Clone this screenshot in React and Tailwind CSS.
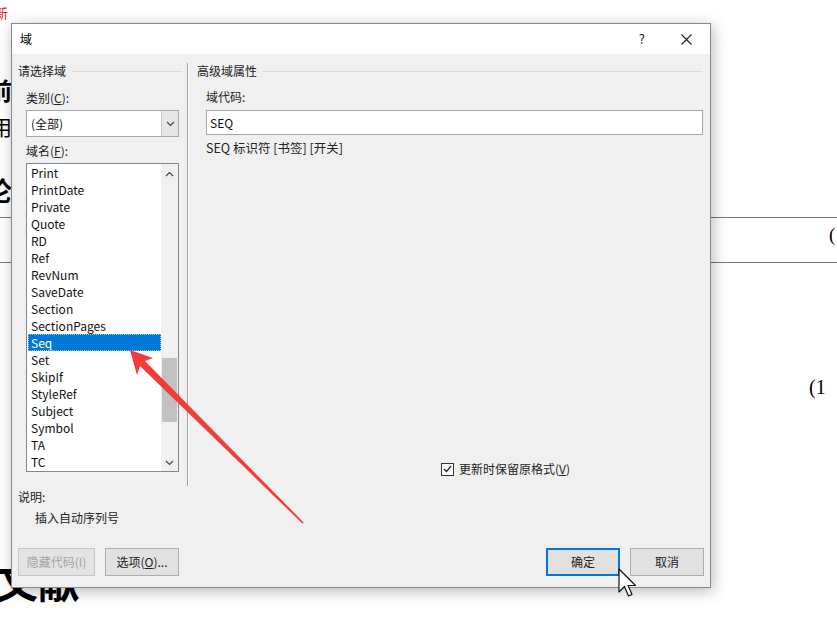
import React from 'react';

const fields = [
  'Print', 'PrintDate', 'Private', 'Quote', 'RD', 'Ref', 'RevNum', 'SaveDate', 'Section',
  'SectionPages', 'Seq', 'Set', 'SkipIf', 'StyleRef', 'Subject', 'Symbol', 'TA', 'TC',
];

const ui = { fontFamily: '"Segoe UI", "Noto Sans CJK SC", "Noto Sans", sans-serif' };
const serif = { fontFamily: '"Liberation Serif", "Noto Sans CJK SC", serif' };

function Chevron({ up }) {
  return (
    <svg width="9" height="6" viewBox="0 0 9 6" className="block">
      <path d={up ? 'M1 5 L4.5 1.5 L8 5' : 'M1 1 L4.5 4.5 L8 1'} fill="none" stroke="#444" strokeWidth="1.2" />
    </svg>
  );
}

function GroupLabel({ children, lineWidth }) {
  return (
    <div className="flex items-center h-4 gap-1.5">
      <span className="text-[12px] leading-4 text-[#222]">{children}</span>
      <div className="h-px bg-[#dcdcdc]" style={{ width: lineWidth }} />
    </div>
  );
}

function Btn({ children, disabled, focused, w }) {
  return (
    <div
      className={`flex items-center justify-center h-[28px] text-[12px] ${
        focused ? 'border-2 border-[#0078d7] bg-[#e1e1e1] text-[#222]'
          : disabled ? 'border border-[#c6c6c6] bg-[#e3e3e3] text-[#a3a3a3]'
          : 'border border-[#adadad] bg-[#e1e1e1] text-[#222]'
      }`}
      style={{ width: w }}
    >
      {children}
    </div>
  );
}

export default function App() {
  return (
    <div className="relative w-[837px] h-[623px] bg-white overflow-hidden" style={ui}>
      {/* document behind */}
      <span className="absolute left-[-5px] top-[4px] text-[13px] text-[#e02020]" style={serif}>新</span>
      <span className="absolute left-[-12px] top-[74px] text-[24px] font-bold text-black" style={serif}>前</span>
      <span className="absolute left-[-9px] top-[113px] text-[21px] text-black" style={serif}>用</span>
      <span className="absolute left-[-14px] top-[173px] text-[26px] font-bold text-black" style={serif}>伦</span>
      <div className="absolute left-0 right-0 top-[217px] h-px bg-[#777]" />
      <div className="absolute left-0 right-0 top-[262px] h-px bg-[#777]" />
      <span className="absolute left-[829px] top-[221px] text-[19px] text-black" style={serif}>(</span>
      <span className="absolute left-[809px] top-[372px] text-[20px] text-black" style={serif}>(1</span>
      <div className="absolute left-0 w-[14px] top-[572px] h-px bg-[#333]" />
      <span className="absolute left-[-4px] top-[562px] text-[42px] leading-[44px] font-bold text-black" style={serif}>文献</span>

      {/* dialog */}
      <div className="absolute left-[11px] top-[23px] w-[700px] h-[565px] border border-[#888] bg-[#f0f0f0] flex flex-col shadow-[2px_3px_14px_rgba(0,0,0,0.28)]">
        <div className="h-[30px] bg-white flex items-center pl-[8px] pr-[18px] shrink-0">
          <span className="text-[12px] text-black" style={{ fontFamily: '"Noto Sans CJK SC", sans-serif' }}>域</span>
          <span className="ml-auto text-[13px] text-[#222] mr-[36px]">?</span>
          <svg width="11" height="11" viewBox="0 0 11 11">
            <path d="M0.5 0.5 L10.5 10.5 M10.5 0.5 L0.5 10.5" stroke="#222" strokeWidth="1.1" />
          </svg>
        </div>

        <div className="flex h-[432px] pt-[9px] shrink-0">
          {/* left */}
          <div className="w-[175px] flex flex-col pl-[6px]">
            <GroupLabel lineWidth={110}>请选择域</GroupLabel>
            <div className="pl-[8px] flex flex-col">
              <span className="mt-[11px] text-[12px] leading-4 text-[#222]">类别(<u>C</u>):</span>
              <div className="mt-[4px] w-[153px] h-[27px] border border-[#a6a6a6] bg-white flex">
                <span className="flex-1 pl-[4px] text-[12px] leading-[25px] text-[#111]">(全部)</span>
                <div className="w-[17px] bg-[#e6e6e6] border-l border-[#c9c9c9] flex items-center justify-center">
                  <Chevron />
                </div>
              </div>
              <span className="mt-[6px] text-[12px] leading-4 text-[#222]">域名(<u>F</u>):</span>
              <div className="mt-[4px] w-[153px] h-[309px] border border-[#828790] bg-white flex">
                <div className="flex-1 flex flex-col pl-px">
                  {fields.map((f) => (
                    <div
                      key={f}
                      className={`h-[17px] leading-[17px] pl-[3px] text-[12px] ${
                        f === 'Seq' ? 'bg-[#0078d7] text-white outline-1 outline-dotted outline-[#9cc6ee] -outline-offset-1' : 'text-[#111]'
                      }`}
                    >
                      {f}
                    </div>
                  ))}
                </div>
                <div className="w-[17px] bg-[#f0f0f0] flex flex-col items-center">
                  <div className="h-[17px] flex items-center justify-center mt-[1px]"><Chevron up /></div>
                  <div className="h-[176px]" />
                  <div className="w-[15px] h-[64px] bg-[#c1c1c1]" />
                  <div className="flex-1" />
                  <div className="h-[17px] flex items-center justify-center"><Chevron /></div>
                </div>
              </div>
            </div>
          </div>

          {/* separator */}
          <div className="w-[2px] border-l border-[#a0a0a0] bg-white" />

          {/* right */}
          <div className="flex-1 flex flex-col pl-[8px]">
            <GroupLabel lineWidth={439}>高级域属性</GroupLabel>
            <div className="pl-[9px] flex flex-col">
              <span className="mt-[10px] text-[12px] leading-4 text-[#222]">域代码:</span>
              <div className="mt-[5px] w-[497px] h-[25px] border border-[#a6a6a6] bg-white pl-[3px] text-[12px] leading-[23px] text-[#111]">SEQ</div>
              <span className="mt-[5px] text-[12.5px] leading-4 text-[#222]">SEQ 标识符 [书签] [开关]</span>
            </div>
            <div className="flex-1" />
            <div className="flex items-center gap-[5px] pl-[244px] mb-[9px]">
              <div className="w-[13px] h-[13px] border border-[#333] bg-white flex items-center justify-center">
                <svg width="9" height="8" viewBox="0 0 9 8"><path d="M1 4 L3.5 6.5 L8 1" fill="none" stroke="#222" strokeWidth="1.2" /></svg>
              </div>
              <span className="text-[12px] leading-4 text-[#222]">更新时保留原格式(<u>V</u>)</span>
            </div>
          </div>
        </div>

        <div className="pl-[6px] flex flex-col">
          <span className="mt-[3px] text-[12px] leading-4 text-[#222]">说明:</span>
          <span className="mt-[5px] pl-[17px] text-[12px] leading-4 text-[#222]">插入自动序列号</span>
        </div>

        <div className="mt-[22px] flex items-center pl-[6px] pr-[6px]">
          <Btn disabled w={77}>隐藏代码(I)</Btn>
          <div className="ml-[10px]"><Btn w={74}>选项(<u>O</u>)...</Btn></div>
          <div className="ml-auto"><Btn focused w={74}>确定</Btn></div>
          <div className="ml-[10px]"><Btn w={74}>取消</Btn></div>
        </div>
      </div>

      {/* red annotation arrow */}
      <svg className="absolute left-0 top-0 pointer-events-none" width="837" height="623">
        <polygon
          points="130,350 153,358 145,361 303.6,522.4 302.4,523.6 140,366 137,375"
          fill="#f23b3b"
        />
      </svg>

      {/* mouse cursor */}
      <svg className="absolute left-[618px] top-[568px]" width="22" height="32" viewBox="0 0 22 32">
        <path d="M1 1 L1 24 L6.5 18.5 L10.5 28 L14 26.5 L10 17.5 L17.5 17.5 Z" fill="white" stroke="#111" strokeWidth="1.2" strokeLinejoin="round" />
      </svg>
    </div>
  );
}
